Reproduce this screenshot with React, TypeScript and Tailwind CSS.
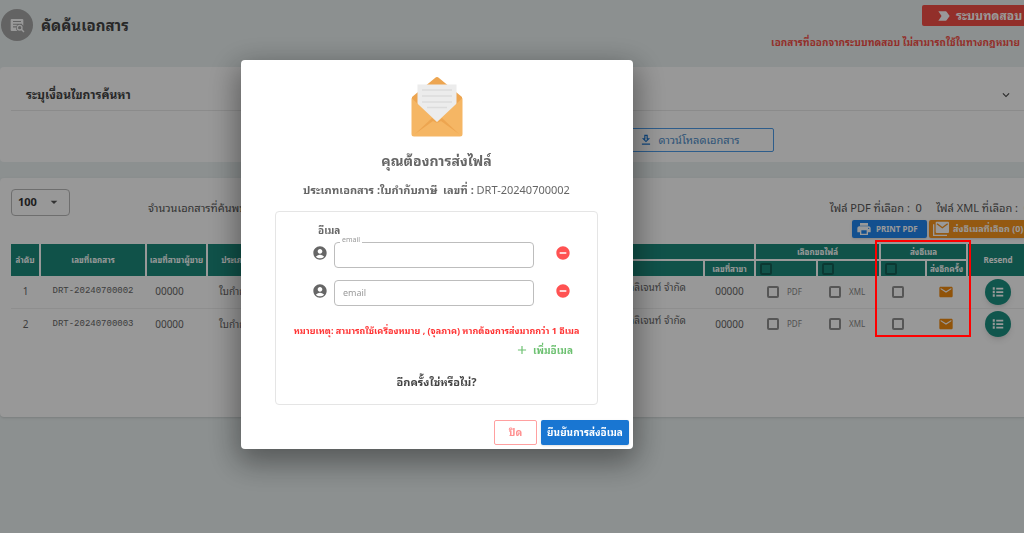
import { useState } from "react";
import {
    MdAccountCircle,
    MdAdd,
    MdArrowDropDown,
    MdEmail,
    MdExpandMore,
    MdLabelImportant,
    MdOutlineDownload,
    MdPrint,
    MdRemoveCircle,
} from "react-icons/md";

interface DocumentRow {
    no: number;
    docNo: string;
    sellerBranch: string;
    type: string;
    buyer: string;
    buyerBranch: string;
}

const documents: DocumentRow[] = [
    {
        no: 1,
        docNo: "DRT-20240700002",
        sellerBranch: "00000",
        type: "ใบกำกับภาษี",
        buyer: "บริษัท อินเทลลิเจนท์ จำกัด",
        buyerBranch: "00000",
    },
    {
        no: 2,
        docNo: "DRT-20240700003",
        sellerBranch: "00000",
        type: "ใบกำกับภาษี",
        buyer: "บริษัท อินเทลลิเจนท์ จำกัด",
        buyerBranch: "00000",
    },
];

const SearchDocIcon = () => (
    <svg viewBox="0 0 24 24" className="size-4" aria-hidden="true">
        <path
            fill="currentColor"
            d="M4 3h16a1.500 1.500 0 0 1 1.500 1.500V13a6 6 0 0 0-2-1.700V10H6v1.600h6.500A6 6 0 0 0 11 14H6v1.600h4.500A6 6 0 0 0 12.500 21H4a1.500 1.500 0 0 1-1.500-1.500v-15A1.500 1.500 0 0 1 4 3zm2 3v1.600h12V6z"
        />
        <circle cx="16" cy="16" r="3.500" fill="none" stroke="currentColor" strokeWidth="2" />
        <path d="m18.500 18.500 4 4" stroke="currentColor" strokeWidth="2.200" />
    </svg>
);

const MailStackIcon = () => (
    <svg viewBox="0 0 24 24" className="size-4" aria-hidden="true">
        <rect x="4" y="1" width="20" height="17" rx="1.500" fill="currentColor" />
        <path d="m6 4 8 6 8-6" fill="none" stroke="#f7941d" strokeWidth="2" />
        <path d="M1 5v16.500h20" fill="none" stroke="currentColor" strokeWidth="2" />
    </svg>
);

const ListIcon = () => (
    <svg viewBox="0 0 24 24" className="size-3.5" fill="currentColor" aria-hidden="true">
        <path d="M3 4h3.500v4H3zM3 10h3.500v4H3zM3 16h3.500v4H3zM9 4.500h12v3H9zM9 10.500h12v3H9zM9 16.500h12v3H9z" />
    </svg>
);

const EnvelopeArt = () => (
    <svg viewBox="0 0 52 60" className="h-[60px] w-[52px]" aria-hidden="true">
        <path d="M26 0Q27 0 28 1L51 20v8H1v-8L24 1Q25 0 26 0z" fill="#eda550" />
        <path d="M6.500 7.500h39V32L26 50 6.500 32z" fill="#ececec" />
        <path d="M11 13h30M11 19h30M11 25h30M16 30.500h20" stroke="#dcdcdc" strokeWidth="1.500" />
        <path d="M.5 21 26 45 51.500 21v36a2.500 2.500 0 0 1-2.500 2.500H3A2.500 2.500 0 0 1 .5 57z" fill="#f5b664" />
        <path d="M4 57 21 41l5 4.500L31 41l17 16-18-13-4 2-4-2z" fill="#eda550" />
    </svg>
);

const TickBox: React.FC<{ label: string; dark?: boolean }> = ({ label, dark }) => (
    <input
        type="checkbox"
        aria-label={label}
        className={
            dark
                ? "block size-3 appearance-none rounded-xs border-2 border-[#135e54] checked:bg-[#135e54]"
                : "block size-3 shrink-0 appearance-none rounded-xs border-2 border-[#8f8f8f] checked:bg-[#8f8f8f]"
        }
    />
);

const EmailField: React.FC<{ id: string; floating?: boolean }> = ({ id, floating }) => (
    <div className="mb-3 flex items-center">
        <MdAccountCircle className="size-4 text-[#666]" />
        <div className="relative ml-1.5 h-[26px] w-[200px]">
            <input
                id={id}
                type="email"
                placeholder={floating ? "" : "email"}
                className="h-full w-full rounded-sm border border-[#bdbdbd] px-2 text-[9px] text-[#555] placeholder:text-[#999]"
            />
            <label
                htmlFor={id}
                className={floating ? "absolute -top-1 left-1.5 bg-white px-0.5 text-[7px] leading-2 text-[#999]" : "sr-only"}
            >
                email
            </label>
        </div>
        <button type="button" aria-label="ลบอีเมล" className="ml-auto text-[#ff5252]">
            <MdRemoveCircle className="size-4" />
        </button>
    </div>
);

const SendMailDialog: React.FC<{ onClose: () => void }> = ({ onClose }) => (
    <div className="fixed inset-0 z-10 flex items-center justify-center bg-black/40 pr-[150px] pb-6">
        <div
            role="dialog"
            aria-modal="true"
            aria-labelledby="dialog-title"
            className="flex w-[392px] flex-col rounded-sm bg-white text-[#666] shadow-[0_10px_30px_4px_rgba(0,0,0,0.4)]"
        >
            <div className="flex flex-col items-center pt-[17px] pr-[35px] pl-[34px]">
                <EnvelopeArt />
                <h2 id="dialog-title" className="mt-3.5 text-[14px] leading-5 font-bold">
                    คุณต้องการส่งไฟล์
                </h2>
                <p className="mt-[11px] text-[11px] leading-4 whitespace-pre">
                    <b>ประเภทเอกสาร :ใบกำกับภาษี&nbsp; เลขที่ :</b> DRT-20240700002
                </p>
                <div className="mt-[13px] w-full rounded-sm border border-[#e5e5e5] pt-2.5 pb-3.5">
                    <div className="pr-[26px] pl-9">
                        <p className="mb-0.5 pl-1.5 text-[10px] leading-4 font-bold">อีเมล</p>
                        <EmailField id="email-1" floating />
                        <EmailField id="email-2" />
                    </div>
                    <p className="mt-[19px] text-center text-[9px] leading-4 font-bold whitespace-nowrap text-[#ff3333]">
                        หมายเหตุ: สามารถใช้เครื่องหมาย , (จุลภาค) หากต้องการส่งมากกว่า 1 อีเมล
                    </p>
                    <div className="mt-[3px] flex justify-end pr-6">
                        <button type="button" className="flex items-center gap-1 text-[10px] leading-4 font-bold text-[#6cc070]">
                            <MdAdd className="size-3.5" />
                            เพิ่มอีเมล
                        </button>
                    </div>
                    <p className="mt-4 text-center text-[11px] leading-4 font-bold text-[#444]">อีกครั้งใช่หรือไม่?</p>
                </div>
            </div>
            <div className="flex justify-end gap-1 pt-[15px] pr-1 pb-1">
                <button
                    type="button"
                    onClick={onClose}
                    className="h-[25px] w-[43px] rounded-xs border border-[#ffa0a0] text-[10px] font-bold text-[#ff9090]"
                >
                    ปิด
                </button>
                <button type="button" className="h-[25px] w-[88px] rounded-xs bg-[#1976d2] text-[10px] font-bold whitespace-nowrap text-white shadow">
                    ยืนยันการส่งอีเมล
                </button>
            </div>
        </div>
    </div>
);

const headCell = "border-r-2 border-white p-0 text-center align-middle text-[8px] leading-3 font-bold whitespace-nowrap text-white";

const DocumentTable = () => (
    <table className="w-full table-fixed border-collapse text-[10px] text-[#666]">
        <colgroup>
            <col className="w-[29px]" />
            <col className="w-[106px]" />
            <col className="w-[61px]" />
            <col className="w-[80px]" />
            <col />
            <col className="w-[51px]" />
            <col className="w-[62px]" />
            <col className="w-[63px]" />
            <col className="w-[46px]" />
            <col className="w-[41px]" />
            <col className="w-[62px]" />
        </colgroup>
        <thead className="bg-[#1b897b]">
            <tr className="h-4">
                <th rowSpan={2} className={headCell}>ลำดับ</th>
                <th rowSpan={2} className={headCell}>เลขที่เอกสาร</th>
                <th rowSpan={2} className={headCell}>เลขที่สาขาผู้ขาย</th>
                <th rowSpan={2} className={headCell}>ประเภทเอกสาร</th>
                <th colSpan={2} className={headCell + " border-b-2"}>ผู้ซื้อ</th>
                <th colSpan={2} className={headCell + " border-b-2"}>เลือกขอไฟล์</th>
                <th colSpan={2} className={headCell + " border-b-2"}>ส่งอีเมล</th>
                <th rowSpan={2} className={headCell}>Resend</th>
            </tr>
            <tr className="h-4">
                <th className={headCell}>ชื่อ</th>
                <th className={headCell}>เลขที่สาขา</th>
                <th className={headCell + " pl-1"}><TickBox dark label="เลือก PDF ทั้งหมด" /></th>
                <th className={headCell + " pl-1"}><TickBox dark label="เลือก XML ทั้งหมด" /></th>
                <th className={headCell + " pl-1"}><TickBox dark label="เลือกส่งอีเมลทั้งหมด" /></th>
                <th className={headCell}>ส่งอีกครั้ง</th>
            </tr>
        </thead>
        <tbody>
            {documents.map((doc) => (
                <tr key={doc.no} className="h-8 border-b border-[#ededed] text-center last:border-0">
                    <td className="p-0">{doc.no}</td>
                    <td className="p-0 font-['Liberation_Mono',monospace] text-[9px]">{doc.docNo}</td>
                    <td className="p-0 pr-3.5">{doc.sellerBranch}</td>
                    <td className="p-0 pl-3 text-left whitespace-nowrap">{doc.type}</td>
                    <td className="p-0 pr-[18px] pb-2 text-right whitespace-nowrap">{doc.buyer}</td>
                    <td className="p-0">{doc.buyerBranch}</td>
                    <td className="p-0">
                        <label className="flex items-center gap-2 pl-3 text-[8px] text-[#888]">
                            <TickBox label={`PDF ${doc.docNo}`} />
                            PDF
                        </label>
                    </td>
                    <td className="p-0">
                        <label className="flex items-center gap-2 pl-3 text-[8px] text-[#888]">
                            <TickBox label={`XML ${doc.docNo}`} />
                            XML
                        </label>
                    </td>
                    <td className="p-0 pl-3"><TickBox label={`อีเมล ${doc.docNo}`} /></td>
                    <td className="p-0">
                        <button type="button" aria-label="ส่งอีกครั้ง" className="block w-full text-[#f08a10]">
                            <MdEmail className="mx-auto size-4" />
                        </button>
                    </td>
                    <td className="p-0">
                        <button
                            type="button"
                            aria-label="Resend"
                            className="mx-auto flex size-[26px] items-center justify-center rounded-full bg-[#1b9080] text-white shadow-md"
                        >
                            <ListIcon />
                        </button>
                    </td>
                </tr>
            ))}
        </tbody>
    </table>
);

const App: React.FC = () => {
    const [open, setOpen] = useState(true);

    return (
        <div className="min-h-screen overflow-hidden bg-[#e9f0f0] font-['Noto_Sans','Noto_Sans_Thai_Looped','Sarabun','Loma','Noto_Sans_Thai',sans-serif]">
            {/* the content runs a little past the right edge of the window */}
            <div className="w-[calc(100%+16px)]">
                <header className="flex h-[67px] justify-between">
                    <div className="flex items-start gap-2 pt-[9px] pl-px">
                        <span className="flex size-8 items-center justify-center rounded-full bg-[#a5a5a5] text-white">
                            <SearchDocIcon />
                        </span>
                        <h1 className="text-[15px] leading-8 font-bold text-[#444]">คัดค้นเอกสาร</h1>
                    </div>
                    <div className="flex flex-col items-end pt-[5px]">
                        <button
                            type="button"
                            className="flex h-[21px] w-[118px] items-center gap-1 rounded-xs bg-[#f44f46] pl-3.5 text-[12px] font-bold whitespace-nowrap text-white"
                        >
                            <MdLabelImportant className="size-4" />
                            ระบบทดสอบ
                        </button>
                        <p className="mt-2 pr-5 text-[10px] leading-4 font-bold whitespace-nowrap text-[#f44f46]">
                            เอกสารที่ออกจากระบบทดสอบ ไม่สามารถใช้ในทางกฎหมาย
                        </p>
                    </div>
                </header>

                <section className="h-[95px] rounded-sm bg-[#fdfdfd] pr-2.5 pl-[11px]">
                    <button
                        type="button"
                        className="flex h-[44px] w-full items-center justify-between border-b border-[#e8e8e8] pt-3 pr-[17px] pl-[15px] text-[12px] font-bold text-[#444]"
                    >
                        ระบุเงื่อนไขการค้นหา
                        <MdExpandMore className="size-3.5" />
                    </button>
                    <div className="flex justify-center pt-[17px]">
                        <button
                            type="button"
                            className="ml-[356px] flex h-6 w-[150px] items-center gap-1.5 rounded-xs border border-[#4d9be8] pl-3.5 text-[11px] whitespace-nowrap text-[#4d8cc8]"
                        >
                            <MdOutlineDownload className="size-3.5 text-[#1976d2]" />
                            ดาวน์โหลดเอกสาร
                        </button>
                    </div>
                </section>

                <section className="mt-4 h-[239px] rounded-sm bg-[#fdfdfd] pt-2.5 pr-2.5 pl-[11px] shadow">
                    <div className="flex h-14 justify-between text-[#555]">
                        <div className="flex items-start">
                            <div className="relative">
                                <select
                                    aria-label="จำนวนแถวต่อหน้า"
                                    className="h-[27px] w-[59px] appearance-none rounded-sm border border-[#b8b8b8] pl-1.5 text-[11px] font-bold text-[#333]"
                                >
                                    <option>100</option>
                                    <option>50</option>
                                </select>
                                <MdArrowDropDown className="pointer-events-none absolute top-1.5 right-2 size-4" />
                            </div>
                            <p className="mt-3 ml-[78px] text-[11px] leading-4 whitespace-nowrap">จำนวนเอกสารที่ค้นพบ : 2 รายการ</p>
                        </div>
                        <div className="flex flex-col items-end">
                            <p className="mt-3 text-[11px] leading-4 whitespace-pre">
                                {"ไฟล์ PDF ที่เลือก :  0     ไฟล์ XML ที่เลือก :  0"}
                            </p>
                            <div className="mt-1 flex gap-0.5 text-[8px] font-bold whitespace-nowrap text-white">
                                <button type="button" className="flex h-[18px] w-[75px] items-center gap-1 rounded-xs bg-[#2085ee] pl-1 shadow">
                                    <MdPrint className="size-4" />
                                    PRINT PDF
                                </button>
                                <button type="button" className="flex h-[18px] w-[101px] items-center gap-1 rounded-xs bg-[#f7941d] pl-1 text-[9px] shadow">
                                    <MailStackIcon />
                                    ส่งอีเมลที่เลือก (0)
                                </button>
                            </div>
                        </div>
                    </div>
                    <div className="relative">
                        <DocumentTable />
                        {/* highlight round the e-mail columns */}
                        <div className="pointer-events-none absolute -top-1 right-[59px] z-20 h-[97px] w-[96px] border-2 border-[#ff0000]" />
                    </div>
                </section>
            </div>
            {open && <SendMailDialog onClose={() => setOpen(false)} />}
        </div>
    );
};

export default App;
